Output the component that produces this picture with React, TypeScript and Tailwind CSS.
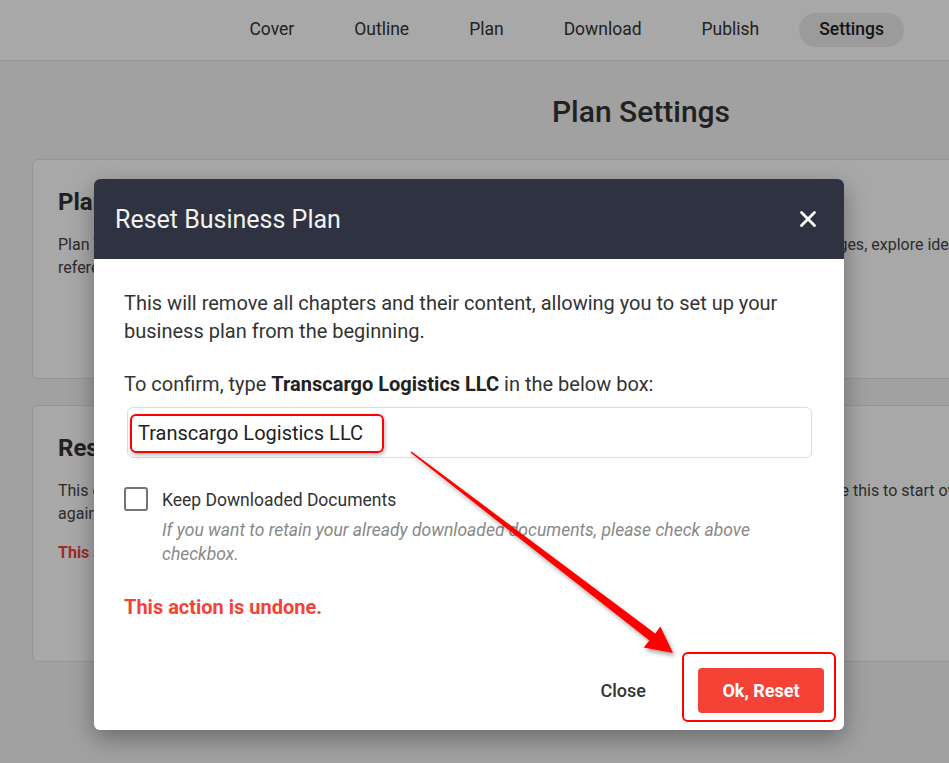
import { X } from "lucide-react";

const navItems = ["Cover", "Outline", "Plan", "Download", "Publish", "Settings"];

const Arrow = () => (
  <svg
    className="absolute left-0 top-0 pointer-events-none"
    width="949"
    height="763"
    viewBox="0 0 949 763"
  >
    <defs>
      <filter id="arrowShadow" x="-20%" y="-20%" width="140%" height="140%">
        <feDropShadow dx="2" dy="3" stdDeviation="2" floodColor="#000" floodOpacity="0.35" />
      </filter>
    </defs>
    <polygon
      points="410.4,452.6 411.6,451.4 655.2,633.4 660.4,626.4 673,653 643.6,647.4 649.4,640.6"
      fill="#ff0000"
      filter="url(#arrowShadow)"
    />
  </svg>
);

export default function App() {
  return (
    <div className="relative w-[949px] h-[763px] overflow-hidden bg-[#f4f4f4] font-['Roboto',sans-serif] text-[#333]">
      {/* page */}
      <div className="h-[61px] bg-white border-b border-[#e2e2e2] flex items-center justify-end gap-5 pr-[45px]">
        {navItems.map((item) => (
          <div
            key={item}
            className={`px-5 h-[34px] flex items-center rounded-full text-[17.5px] leading-none ${
              item === "Settings" ? "bg-[#ebebeb] font-medium text-[#222]" : "text-[#333]"
            }`}
          >
            {item}
          </div>
        ))}
      </div>

      <div className="flex justify-center pl-[333px] pt-[33px] pb-[29px]">
        <h1 className="text-[30px] font-medium text-[#333] leading-[36px]">Plan Settings</h1>
      </div>

      <div className="ml-[32px] w-[1200px] flex flex-col gap-[26px]">
        <div className="h-[220px] bg-white border border-[#e3e3e3] rounded-md px-[25px] pt-[26px]">
          <h2 className="text-[24px] font-bold leading-[32px] text-[#333]">Plan Information</h2>
          <p className="mt-[15px] text-[16px] leading-[23px] text-[#444]">
            Plan Title, Business Type and other details guide AI to write your plans. Keep it accurate as your business changes, explore ideas or use them as a
            <br />
            reference for all chapters in your plan.
          </p>
        </div>
        <div className="h-[257px] bg-white border border-[#e3e3e3] rounded-md px-[25px] pt-[26px]">
          <h2 className="text-[24px] font-bold leading-[32px] text-[#333]">Reset Business Plan</h2>
          <p className="mt-[15px] text-[16px] leading-[23px] text-[#444]">
            This option deletes all chapters and its content from your business plan. If your plan needs a new approach, use this to start over
            <br />
            again from the beginning with a clean outline.
          </p>
          <p className="mt-[16px] text-[16px] font-bold text-[#f44336]">This action is undone.</p>
        </div>
      </div>

      {/* overlay */}
      <div className="absolute inset-0 bg-black/[0.34]" />

      {/* modal */}
      <div className="absolute left-[94px] top-[179px] w-[750px] bg-white rounded-md shadow-[0_8px_24px_rgba(0,0,0,0.35)]">
        <div className="h-[80px] bg-[#2f3240] rounded-t-md flex items-center justify-between pl-[21px] pr-[23px]">
          <h3 className="text-[25px] text-[#f2f2f2] leading-none">Reset Business Plan</h3>
          <X className="w-[26px] h-[26px] text-white" strokeWidth={2.6} />
        </div>

        <div className="px-[30px] pt-[30px]">
          <p className="text-[20px] leading-[28px] text-[#333]">
            This will remove all chapters and their content, allowing you to set up your business plan from the beginning.
          </p>
          <p className="mt-[25px] text-[20px] leading-[28px] text-[#333]">
            To confirm, type <span className="font-bold text-[#222]">Transcargo Logistics LLC</span> in the below box:
          </p>
          <div className="relative mt-[9px] ml-[3px] mr-[2px] h-[51px] border border-[#dcdcdc] rounded-md flex items-center pl-[10px] text-[20px] text-[#222]">
            Transcargo Logistics LLC
            <div className="absolute left-[2px] top-[6px] w-[254px] h-[39px] border-2 border-[#ff0000] rounded-md shadow-[1px_2px_4px_rgba(0,0,0,0.3)]" />
          </div>

          <div className="mt-[29px] flex gap-[14px]">
            <div className="w-[24px] h-[24px] shrink-0 border-2 border-[#757575] rounded-[3px]" />
            <div>
              <div className="text-[17.5px] leading-[26px] text-[#333]">Keep Downloaded Documents</div>
              <p className="mt-[5px] text-[17.5px] italic leading-[24px] text-[#888]">
                If you want to retain your already downloaded documents, please check above checkbox.
              </p>
            </div>
          </div>

          <p className="mt-[27px] text-[20px] font-bold leading-[28px] text-[#f44336]">This action is undone.</p>
        </div>

        <div className="relative flex items-center justify-end gap-[52px] pr-[20px] pt-[47px] pb-[17px]">
          <button className="text-[18px] font-medium text-[#333]">Close</button>
          <button className="w-[126px] h-[45px] bg-[#f44336] rounded text-white text-[18px] font-bold">Ok, Reset</button>
          <div className="absolute right-[8px] bottom-[8px] w-[154px] h-[70px] border-2 border-[#ff0000] rounded-md" />
        </div>
      </div>

      <Arrow />
    </div>
  );
}
